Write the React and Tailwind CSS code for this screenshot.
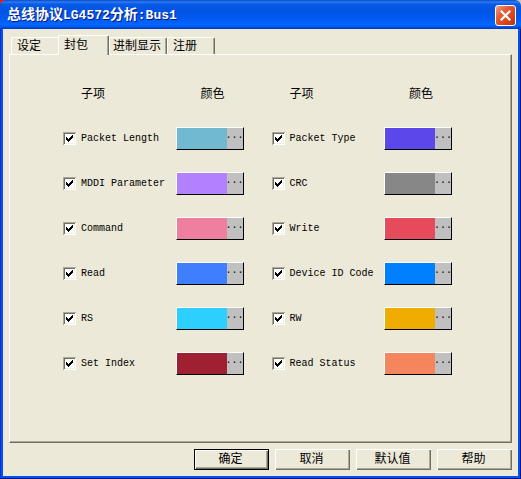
import React, { useState } from 'react';

const TABS = [
  { id: 'settings', label: '设定', className: 'w-[47px] pl-[5px]' },
  { id: 'packet', label: '封包', className: 'w-[51px] pl-[5px]' },
  { id: 'radix', label: '进制显示', className: 'w-[58px] pl-[3px]' },
  { id: 'register', label: '注册', className: 'w-[48px] pl-[5px]' },
];

const LEFT_ITEMS = [
  { label: 'Packet Length', color: 'bg-[#70b9d0]' },
  { label: 'MDDI Parameter', color: 'bg-[#b380ff]' },
  { label: 'Command', color: 'bg-[#ef7f9f]' },
  { label: 'Read', color: 'bg-[#3f7fff]' },
  { label: 'RS', color: 'bg-[#2dcfff]' },
  { label: 'Set Index', color: 'bg-[#9f2030]' },
];

const RIGHT_ITEMS = [
  { label: 'Packet Type', color: 'bg-[#5c48ea]' },
  { label: 'CRC', color: 'bg-[#878787]' },
  { label: 'Write', color: 'bg-[#e64b5c]' },
  { label: 'Device ID Code', color: 'bg-[#0080ff]' },
  { label: 'RW', color: 'bg-[#eead00]' },
  { label: 'Read Status', color: 'bg-[#f5855c]' },
];

const TitleBar = () => (
  <header className="bg-linear-to-r from-[#e02020] from-50% to-[#c8c4b8] to-50%">
    <div className="flex h-[29px] items-center justify-between rounded-t-md bg-[linear-gradient(to_bottom,#0a48c8_0px,#2c7cf0_2px,#0a5ce8_4px,#0054e3_10px,#0058ee_18px,#0066ff_24px,#0060fc_26px,#0038b8_29px)] pt-[2px] pr-[5px] pl-[7px]">
      <h1 className="text-[14px] leading-4 font-bold whitespace-nowrap text-white [text-shadow:1px_1px_#0a1883]">
        总线协议<span className="text-[13px]">LG4572</span>分析<span className="text-[13px]">:Bus1</span>
      </h1>
      <button
        type="button"
        aria-label="关闭"
        className="flex size-[21px] items-center justify-center rounded-[3px] border border-white bg-[linear-gradient(135deg,#f0a088_0%,#e45c38_35%,#d84418_70%,#b83410_100%)]"
      >
        <svg viewBox="0 0 11 11" className="size-[11px]" stroke="white" strokeWidth="2.2">
          <path d="M0.8 0.8 10.2 10.2M10.2 0.8 0.8 10.2" />
        </svg>
      </button>
    </div>
  </header>
);

const Tab = ({ tab, selected, onSelect }) => (
  <button
    type="button"
    role="tab"
    aria-selected={selected}
    onClick={onSelect}
    className={`rounded-t-[2px] border-t border-l border-white pt-px text-left whitespace-nowrap ${tab.className} ${
      selected
        ? 'relative z-10 -mb-px h-5 border-r border-r-[#716f64] bg-[#ece9d8] shadow-[inset_-1px_0_#aca899]'
        : 'h-[17px] border-r border-r-[#716f64] shadow-[inset_-1px_0_#aca899] first:border-r-0 first:shadow-none'
    }`}
  >
    {tab.label}
  </button>
);

const ColorButton = ({ label, color }) => (
  <button
    type="button"
    aria-label={`${label} 颜色`}
    className="flex h-[23px] w-[68px] shrink-0 border border-t-white border-r-black border-b-black border-l-white bg-[#c0c0c0]"
  >
    <span className={`h-full w-[50px] shrink-0 ${color}`} />
    <span className="flex h-full w-4 justify-center text-[10px] leading-4">...</span>
  </button>
);

const ItemRow = ({ label, color }) => (
  <li className="flex h-[45px] items-center justify-between">
    <label className="flex items-center gap-[5px] whitespace-nowrap">
      <span className="grid size-[13px] *:col-start-1 *:row-start-1">
        <input
          type="checkbox"
          defaultChecked
          className="peer size-[13px] appearance-none bg-white shadow-[inset_1px_1px_#aca899,inset_-1px_-1px_#ffffff,inset_2px_2px_#716f64,inset_-2px_-2px_#f1efe2]"
        />
        <svg
          viewBox="0 0 13 13"
          shapeRendering="crispEdges"
          className="pointer-events-none invisible size-[13px] peer-checked:visible"
        >
          <path d="M3 5h1v1h1v1h1v-1h1v-1h1v-1h1v-1h1v3h-1v1h-1v1h-1v1h-1v1h-1v-1h-1v-1h-1z" />
        </svg>
      </span>
      <span className="text-[10px]">{label}</span>
    </label>
    <ColorButton label={label} color={color} />
  </li>
);

const ItemGroup = ({ items }) => (
  <section className="flex-1">
    <div className="flex h-[45px] items-center justify-between pt-[3px] pl-[18px]">
      <span>子项</span>
      <span className="w-[43px]">颜色</span>
    </div>
    <ul>
      {items.map((item) => (
        <ItemRow key={item.label} {...item} />
      ))}
    </ul>
  </section>
);

const DialogButton = ({ children, primary }) => (
  <button
    type="button"
    className={`flex h-[21px] w-[75px] items-center justify-center ${
      primary
        ? 'border border-black shadow-[inset_1px_1px_#ffffff,inset_-1px_-1px_#716f64,inset_-2px_-2px_#aca899]'
        : 'shadow-[inset_1px_1px_#ffffff,inset_-1px_-1px_#716f64,inset_-2px_-2px_#aca899]'
    }`}
  >
    <span className="pt-px pr-[2px]">{children}</span>
  </button>
);

export default function App() {
  const [activeTab, setActiveTab] = useState('packet');

  return (
    <div className="flex min-h-screen flex-col font-['Liberation_Mono','Noto_Sans_CJK_SC',monospace] text-[12px] leading-4 text-black">
      <TitleBar />
      <div className="flex flex-1 flex-col border-x border-b border-r-[#00138c] border-b-[#00138c] border-l-[#0831d9]">
        <main className="flex flex-1 flex-col border-x-2 border-b-2 border-[#0850e8] bg-[#ece9d8] p-[6px]">
          <div role="tablist" className="flex items-end pl-[2px]">
            {TABS.map((tab) => (
              <Tab
                key={tab.id}
                tab={tab}
                selected={tab.id === activeTab}
                onSelect={() => setActiveTab(tab.id)}
              />
            ))}
          </div>
          <div
            role="tabpanel"
            className="flex flex-1 border border-t-white border-r-[#716f64] border-b-[#716f64] border-l-white shadow-[inset_-1px_-1px_#aca899]"
          >
            <div className="flex flex-1 gap-7 pt-4 pr-[59px] pl-[53px]">
              <ItemGroup items={LEFT_ITEMS} />
              <ItemGroup items={RIGHT_ITEMS} />
            </div>
          </div>
          <footer className="flex justify-end gap-[6px] pt-[6px]">
            <DialogButton primary>确定</DialogButton>
            <DialogButton>取消</DialogButton>
            <DialogButton>默认值</DialogButton>
            <DialogButton>帮助</DialogButton>
          </footer>
        </main>
      </div>
    </div>
  );
}
